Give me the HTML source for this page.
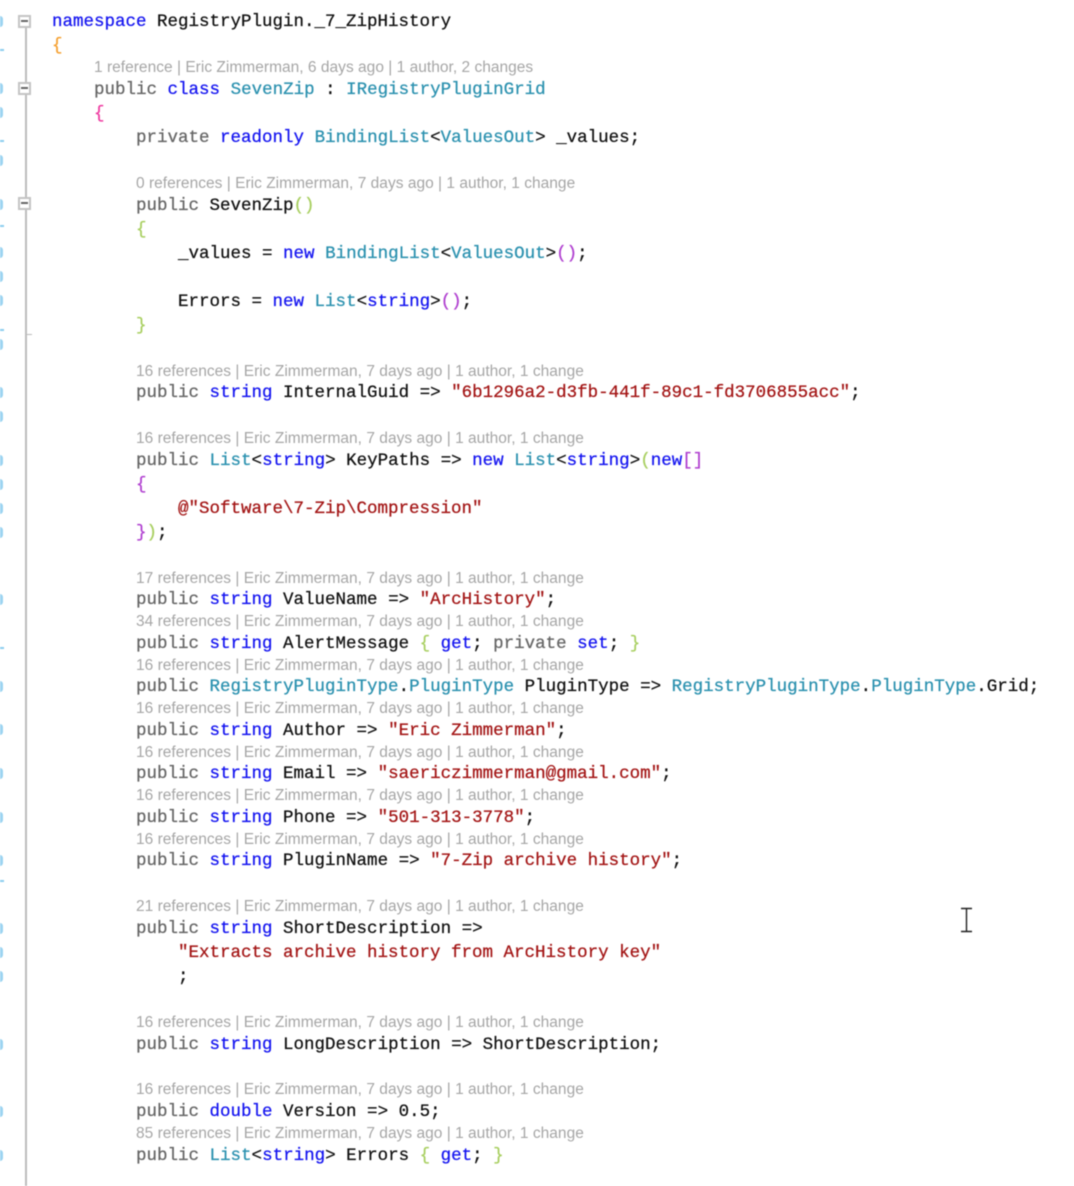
<!DOCTYPE html>
<html><head><meta charset="utf-8"><style>
html,body{margin:0;padding:0;background:#fff}
#p{position:relative;width:1074px;height:1186px;overflow:hidden;background:#fff;filter:blur(.4px)}
.l{position:absolute;margin-top:1px;height:24px;font:17.5px/24px "Liberation Mono",monospace;white-space:pre;color:#111;-webkit-text-stroke:.25px currentColor}
.c{position:absolute;margin-top:1px;height:20px;font:15.5px/20px "Liberation Sans",sans-serif;letter-spacing:.02px;white-space:pre;color:#a6a6a6}
.k{color:#1414f0}.t{color:#2b91af}.s{color:#a31515}.g{color:#666}.o{color:#f5a030}.m{color:#ee3aa0}.y{color:#a8cf60}.v{color:#b040d0}.b{color:#333}
.n{position:absolute;left:-6px;width:9px;height:11px;margin-top:-1px;background:#5ab8e8;border-radius:3px;opacity:.6}
.d{position:absolute;left:0;width:4px;height:2px;background:#5ab8e8;opacity:.7}
.box{position:absolute;left:18px;width:9px;height:9px;border:2px solid #c4c4c4;background:#fff;box-sizing:content-box}
.box:after{content:"";position:absolute;left:1px;top:3px;width:7px;height:2px;background:#666}
</style></head><body><div id="p">
<div style="position:absolute;left:25px;top:28px;width:2px;height:1158px;background:#bdbdbd"></div>
<div style="position:absolute;left:27px;top:334px;width:5px;height:1px;background:#bbb"></div>
<div class="box" style="top:15px"></div><div class="box" style="top:82px"></div><div class="box" style="top:197px"></div>
<div class="n" style="top:17px"></div><div class="d" style="top:49px"></div><div class="n" style="top:84px"></div><div class="n" style="top:108px"></div><div class="d" style="top:140px"></div><div class="n" style="top:156px"></div><div class="n" style="top:200px"></div><div class="d" style="top:225px"></div><div class="n" style="top:248px"></div><div class="n" style="top:272px"></div><div class="n" style="top:296px"></div><div class="d" style="top:329px"></div><div class="n" style="top:340px"></div><div class="n" style="top:388px"></div><div class="n" style="top:412px"></div><div class="n" style="top:456px"></div><div class="n" style="top:480px"></div><div class="n" style="top:504px"></div><div class="n" style="top:528px"></div><div class="n" style="top:595px"></div><div class="d" style="top:647px"></div><div class="n" style="top:682px"></div><div class="n" style="top:725px"></div><div class="n" style="top:769px"></div><div class="n" style="top:813px"></div><div class="n" style="top:856px"></div><div class="d" style="top:880px"></div><div class="n" style="top:924px"></div><div class="n" style="top:948px"></div><div class="n" style="top:972px"></div><div class="n" style="top:1040px"></div><div class="n" style="top:1107px"></div><div class="n" style="top:1151px"></div>

<div class="l" style="left:52px;top:9px"><span class="k">namespace</span> RegistryPlugin._7_ZipHistory</div>
<div class="l o" style="left:52px;top:33px">{</div>
<div class="c" style="left:94px;top:57px">1 reference | Eric Zimmerman, 6 days ago | 1 author, 2 changes</div>
<div class="l" style="left:94px;top:77px"><span class="g">public</span> <span class="k">class</span> <span class="t">SevenZip</span> : <span class="t">IRegistryPluginGrid</span></div>
<div class="l m" style="left:94px;top:101px">{</div>
<div class="l" style="left:136px;top:125px"><span class="g">private</span> <span class="k">readonly</span> <span class="t">BindingList</span>&lt;<span class="t">ValuesOut</span>&gt; _values;</div>
<div class="c" style="left:136px;top:173px">0 references | Eric Zimmerman, 7 days ago | 1 author, 1 change</div>
<div class="l" style="left:136px;top:193px"><span class="g">public</span> SevenZip<span class="y">()</span></div>
<div class="l y" style="left:136px;top:217px">{</div>
<div class="l" style="left:178px;top:241px">_values = <span class="k">new</span> <span class="t">BindingList</span>&lt;<span class="t">ValuesOut</span>&gt;<span class="v">()</span>;</div>
<div class="l" style="left:178px;top:289px">Errors = <span class="k">new</span> <span class="t">List</span>&lt;<span class="k">string</span>&gt;<span class="v">()</span>;</div>
<div class="l y" style="left:136px;top:313px">}</div>
<div class="c" style="left:136px;top:361px">16 references | Eric Zimmerman, 7 days ago | 1 author, 1 change</div>
<div class="l" style="left:136px;top:380px"><span class="g">public</span> <span class="k">string</span> InternalGuid =&gt; <span class="s">"6b1296a2-d3fb-441f-89c1-fd3706855acc"</span>;</div>
<div class="c" style="left:136px;top:428px">16 references | Eric Zimmerman, 7 days ago | 1 author, 1 change</div>
<div class="l" style="left:136px;top:448px"><span class="g">public</span> <span class="t">List</span>&lt;<span class="k">string</span>&gt; KeyPaths =&gt; <span class="k">new</span> <span class="t">List</span>&lt;<span class="k">string</span>&gt;<span class="y">(</span><span class="k">new</span><span class="v">[]</span></div>
<div class="l v" style="left:136px;top:472px">{</div>
<div class="l s" style="left:178px;top:496px">@"Software\7-Zip\Compression"</div>
<div class="l" style="left:136px;top:520px"><span class="v">}</span><span class="y">)</span>;</div>
<div class="c" style="left:136px;top:568px">17 references | Eric Zimmerman, 7 days ago | 1 author, 1 change</div>
<div class="l" style="left:136px;top:587px"><span class="g">public</span> <span class="k">string</span> ValueName =&gt; <span class="s">"ArcHistory"</span>;</div>
<div class="c" style="left:136px;top:611px">34 references | Eric Zimmerman, 7 days ago | 1 author, 1 change</div>
<div class="l" style="left:136px;top:631px"><span class="g">public</span> <span class="k">string</span> AlertMessage <span class="y">{</span> <span class="k">get</span>; <span class="g">private</span> <span class="k">set</span>; <span class="y">}</span></div>
<div class="c" style="left:136px;top:655px">16 references | Eric Zimmerman, 7 days ago | 1 author, 1 change</div>
<div class="l" style="left:136px;top:674px"><span class="g">public</span> <span class="t">RegistryPluginType</span>.<span class="t">PluginType</span> PluginType =&gt; <span class="t">RegistryPluginType</span>.<span class="t">PluginType</span>.Grid;</div>
<div class="c" style="left:136px;top:698px">16 references | Eric Zimmerman, 7 days ago | 1 author, 1 change</div>
<div class="l" style="left:136px;top:718px"><span class="g">public</span> <span class="k">string</span> Author =&gt; <span class="s">"Eric Zimmerman"</span>;</div>
<div class="c" style="left:136px;top:742px">16 references | Eric Zimmerman, 7 days ago | 1 author, 1 change</div>
<div class="l" style="left:136px;top:761px"><span class="g">public</span> <span class="k">string</span> Email =&gt; <span class="s">"saericzimmerman@gmail.com"</span>;</div>
<div class="c" style="left:136px;top:785px">16 references | Eric Zimmerman, 7 days ago | 1 author, 1 change</div>
<div class="l" style="left:136px;top:805px"><span class="g">public</span> <span class="k">string</span> Phone =&gt; <span class="s">"501-313-3778"</span>;</div>
<div class="c" style="left:136px;top:829px">16 references | Eric Zimmerman, 7 days ago | 1 author, 1 change</div>
<div class="l" style="left:136px;top:848px"><span class="g">public</span> <span class="k">string</span> PluginName =&gt; <span class="s">"7-Zip archive history"</span>;</div>
<div class="c" style="left:136px;top:896px">21 references | Eric Zimmerman, 7 days ago | 1 author, 1 change</div>
<div class="l" style="left:136px;top:916px"><span class="g">public</span> <span class="k">string</span> ShortDescription =&gt;</div>
<div class="l s" style="left:178px;top:940px">"Extracts archive history from ArcHistory key"</div>
<div class="l" style="left:178px;top:964px">;</div>
<div class="c" style="left:136px;top:1012px">16 references | Eric Zimmerman, 7 days ago | 1 author, 1 change</div>
<div class="l" style="left:136px;top:1032px"><span class="g">public</span> <span class="k">string</span> LongDescription =&gt; ShortDescription;</div>
<div class="c" style="left:136px;top:1079px">16 references | Eric Zimmerman, 7 days ago | 1 author, 1 change</div>
<div class="l" style="left:136px;top:1099px"><span class="g">public</span> <span class="k">double</span> Version =&gt; 0.5;</div>
<div class="c" style="left:136px;top:1123px">85 references | Eric Zimmerman, 7 days ago | 1 author, 1 change</div>
<div class="l" style="left:136px;top:1143px"><span class="g">public</span> <span class="t">List</span>&lt;<span class="k">string</span>&gt; Errors <span class="y">{</span> <span class="k">get</span>; <span class="y">}</span></div>

<svg style="position:absolute;left:960px;top:907px" width="14" height="26" viewBox="0 0 14 26"><path d="M1 1.5H12M1 24.5H12M6.5 1.5V24.5" stroke="#222" stroke-width="1.4" fill="none"/></svg>
</div></body></html>
